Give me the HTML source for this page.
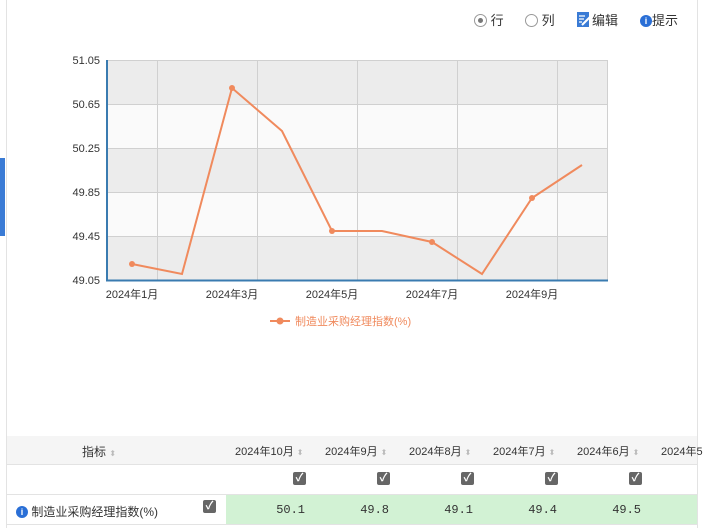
<!DOCTYPE html>
<html><head><meta charset="utf-8"><style>
body{margin:0;width:704px;height:528px;overflow:hidden;background:#fff;font-family:"Liberation Sans","Noto Sans CJK SC",sans-serif;position:relative}
.a{position:absolute}
.t{font-size:12px;color:#333;white-space:nowrap}
.cb{position:absolute;width:13px;height:13px;background:#666;border-radius:2px;color:#fff;font-size:11px;line-height:13px;text-align:center;font-weight:bold}
.arr{color:#bbb;font-size:8px}
.ii{display:inline-block;width:12px;height:12px;background:#2a6fd6;border-radius:50%;color:#fff;font-size:9px;line-height:12px;text-align:center;font-weight:bold;vertical-align:middle;position:relative;top:-1px}
</style></head><body>
<div class="a" style="left:6px;top:0;width:1px;height:528px;background:#e3e3e3"></div>
<div class="a" style="left:697px;top:0;width:1px;height:528px;background:#e3e3e3"></div>
<div class="a" style="left:0;top:158px;width:5px;height:78px;background:#3a7bd5"></div>
<!-- toolbar -->
<div class="a t" style="left:474px;top:10px;font-size:13px"><span style="display:inline-block;width:11px;height:11px;border:1px solid #999;border-radius:50%;vertical-align:-2px;position:relative"><span style="position:absolute;left:3px;top:3px;width:5px;height:5px;background:#777;border-radius:50%"></span></span> 行</div>
<div class="a t" style="left:525px;top:10px;font-size:13px"><span style="display:inline-block;width:11px;height:11px;border:1px solid #999;border-radius:50%;vertical-align:-2px"></span> 列</div>
<div class="a t" style="left:577px;top:10px;font-size:13px"><svg width="15" height="15" style="vertical-align:-2px"><rect x="0" y="0" width="12" height="15" fill="#3a7bd5"/><path d="M2 4h6M2 7h5M2 10h3" stroke="#fff" stroke-width="1.2"/><path d="M5 13l8-8" stroke="#fff" stroke-width="2"/></svg>编辑</div>
<div class="a t" style="left:640px;top:10px;font-size:13px"><span class="ii">i</span>提示</div>
<svg class="a" style="left:0;top:0" width="704" height="340">
<rect x="107" y="60" width="500" height="44" fill="#ececec"/>
<rect x="107" y="104" width="500" height="44" fill="#fafafa"/>
<rect x="107" y="148" width="500" height="44" fill="#ececec"/>
<rect x="107" y="192" width="500" height="44" fill="#fafafa"/>
<rect x="107" y="236" width="500" height="44" fill="#ececec"/>
<g stroke="#d0d0d0" stroke-width="1">
<line x1="107" y1="60.5" x2="607" y2="60.5"/><line x1="107" y1="104.5" x2="607" y2="104.5"/><line x1="107" y1="148.5" x2="607" y2="148.5"/><line x1="107" y1="192.5" x2="607" y2="192.5"/><line x1="107" y1="236.5" x2="607" y2="236.5"/>
<line x1="157.5" y1="60" x2="157.5" y2="280"/><line x1="257.5" y1="60" x2="257.5" y2="280"/><line x1="357.5" y1="60" x2="357.5" y2="280"/><line x1="457.5" y1="60" x2="457.5" y2="280"/><line x1="557.5" y1="60" x2="557.5" y2="280"/><line x1="607.5" y1="60" x2="607.5" y2="280"/>
</g>
<line x1="107" y1="60" x2="107" y2="281" stroke="#3a7bb0" stroke-width="2"/>
<line x1="106" y1="280.5" x2="608" y2="280.5" stroke="#3a7bb0" stroke-width="2"/>
<g font-size="11" fill="#333" text-anchor="end">
<text x="100" y="64">51.05</text><text x="100" y="108">50.65</text><text x="100" y="152">50.25</text><text x="100" y="196">49.85</text><text x="100" y="240">49.45</text><text x="100" y="284">49.05</text>
</g>
<g font-size="11" fill="#333" text-anchor="middle" font-family="Liberation Sans,Noto Sans CJK SC,sans-serif">
<text x="132" y="298">2024年1月</text><text x="232" y="298">2024年3月</text><text x="332" y="298">2024年5月</text><text x="432" y="298">2024年7月</text><text x="532" y="298">2024年9月</text>
</g>
<polyline fill="none" stroke="#f08a5d" stroke-width="2" points="132,264 182,274 232,88 282,131 332,231 382,231 432,242 482,274 532,198 582,165"/>
<g fill="#f08a5d"><circle cx="132" cy="264" r="3"/><circle cx="232" cy="88" r="3"/><circle cx="332" cy="231" r="3"/><circle cx="432" cy="242" r="3"/><circle cx="532" cy="198" r="3"/>
<line x1="270" y1="321" x2="290" y2="321" stroke="#f08a5d" stroke-width="2"/><circle cx="280" cy="321" r="3.5"/></g>
<text x="295" y="325" font-size="11" fill="#f08a5d" font-family="Liberation Sans,Noto Sans CJK SC,sans-serif">制造业采购经理指数(%)</text>
</svg>
<!-- table -->
<div class="a" style="left:7px;top:436px;width:690px;height:28px;background:#f5f5f5;border-bottom:1px solid #e3e3e3"></div>
<div class="a" style="left:7px;top:494px;width:690px;height:1px;background:#e3e3e3"></div>
<div class="a" style="left:226px;top:495px;width:471px;height:29px;background:#d2f2d4"></div>
<div class="a" style="left:7px;top:524px;width:690px;height:1px;background:#e3e3e3"></div>
<div class="a t" style="left:82px;top:443px">指标 <span class="arr">⬍</span></div>
<div class="a t" style="left:235px;top:443px;font-size:11px">2024年10月 <span class="arr">⬍</span></div>
<div class="a t" style="left:325px;top:443px;font-size:11px">2024年9月 <span class="arr">⬍</span></div>
<div class="a t" style="left:409px;top:443px;font-size:11px">2024年8月 <span class="arr">⬍</span></div>
<div class="a t" style="left:493px;top:443px;font-size:11px">2024年7月 <span class="arr">⬍</span></div>
<div class="a t" style="left:577px;top:443px;font-size:11px">2024年6月 <span class="arr">⬍</span></div>
<div class="a t" style="left:661px;top:443px;font-size:11px">2024年5</div>
<div class="cb" style="left:293px;top:472px">✓</div><div class="cb" style="left:377px;top:472px">✓</div><div class="cb" style="left:461px;top:472px">✓</div><div class="cb" style="left:545px;top:472px">✓</div><div class="cb" style="left:629px;top:472px">✓</div>
<div class="cb" style="left:203px;top:500px">✓</div>
<div class="a t" style="left:16px;top:503px"><span class="ii">i</span> 制造业采购经理指数(%)</div>
<div class="a t" style="left:240px;width:65px;text-align:right;top:503px;font-family:'Liberation Mono',monospace">50.1</div>
<div class="a t" style="left:324px;width:65px;text-align:right;top:503px;font-family:'Liberation Mono',monospace">49.8</div>
<div class="a t" style="left:408px;width:65px;text-align:right;top:503px;font-family:'Liberation Mono',monospace">49.1</div>
<div class="a t" style="left:492px;width:65px;text-align:right;top:503px;font-family:'Liberation Mono',monospace">49.4</div>
<div class="a t" style="left:576px;width:65px;text-align:right;top:503px;font-family:'Liberation Mono',monospace">49.5</div>
</body></html>
